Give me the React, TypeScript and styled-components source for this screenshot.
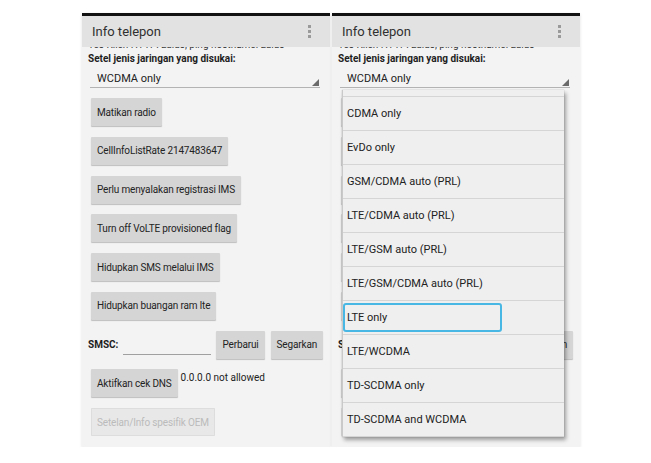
import React from "react";
import styled, { createGlobalStyle, css } from "styled-components";

const GlobalStyle = createGlobalStyle`
  html, body { margin: 0; padding: 0; background: #ffffff; }
  body {
    font-family: Roboto, "Noto Sans", "Liberation Sans", sans-serif;
    -webkit-font-smoothing: antialiased;
  }
`;

const Stage = styled.main`
  display: flex;
  gap: 2px;
  padding: 13px 0 0 82px;
`;

const Phone = styled.section`
  position: relative;
  width: 248px;
  height: 434px;
  display: flex;
  flex-direction: column;
  background: #f3f3f3;
  overflow: hidden;
  box-shadow: 0 1px 3px rgba(0, 0, 0, 0.12);
`;

const StatusStrip = styled.div`
  flex: none;
  height: 3px;
  background: #121212;
`;

const ActionBar = styled.header`
  flex: none;
  height: 31px;
  display: flex;
  align-items: center;
  justify-content: space-between;
  padding: 0 19px 0 10px;
  background: #e2e2e2;
`;

const Title = styled.h1`
  margin: 0;
  font-size: 13px;
  font-weight: 400;
  color: #303030;
`;

const MenuDots = styled.span`
  display: flex;
  flex-direction: column;
  gap: 2px;
`;

const Dot = styled.i`
  display: block;
  width: 3px;
  height: 3px;
  background: #9a9a9a;
`;

const Content = styled.div`
  flex: 1;
  overflow: hidden;
  padding-left: 6px;
  display: flex;
  flex-direction: column;
  align-items: flex-start;
`;

/* last line of the info list, scrolled mostly under the action bar */
const ClippedLine = styled.p`
  margin: -9px 0 1px;
  font-size: 10px;
  line-height: 13px;
  color: #3a3a3a;
  white-space: nowrap;
`;

const FieldLabel = styled.div`
  font-size: 10px;
  font-weight: 700;
  line-height: 13px;
  color: #1e1e1e;
  white-space: nowrap;
`;

const Spinner = styled.div`
  align-self: stretch;
  box-sizing: border-box;
  height: 23px;
  margin: 0 10px 0 2px;
  padding: 0 1px 1px 7px;
  display: flex;
  border-bottom: 1px solid #b3b3b3;
`;

const SpinnerValue = styled.span`
  flex: 1;
  padding-top: 7px;
  font-size: 11px;
  line-height: 13px;
  color: #222222;
`;

const CornerMark = styled.svg`
  align-self: flex-end;
  flex: none;
`;

const Controls = styled.div`
  align-self: stretch;
  display: flex;
  flex-direction: column;
  align-items: flex-start;
  gap: 10.75px;
  margin-top: 10px;
`;

const Button = styled.button<{ $ml?: number }>`
  flex: none;
  height: 28px;
  margin: 0 0 0 ${(p) => (p.$ml ?? 3)}px;
  padding: 0 6px;
  border: none;
  border-radius: 1px;
  background: #d5d5d5;
  color: #232323;
  font-family: inherit;
  font-size: 10px;
  letter-spacing: -0.15px;
  white-space: nowrap;
  box-shadow: 0 1px 1px rgba(0, 0, 0, 0.22);

  &:disabled {
    background: #e8e8e8;
    color: #bbbbbb;
    box-shadow: inset 0 0 0 1px #dddddd;
  }
`;

const SmscRow = styled.div`
  display: flex;
  align-items: center;
`;

const TextInput = styled.span`
  align-self: flex-end;
  width: 88px;
  height: 18px;
  margin: 0 5px 4px 5px;
  border-bottom: 1px solid #a0a0a0;
`;

const DnsRow = styled.div`
  display: flex;
  align-items: flex-start;
  gap: 3px;
`;

const Note = styled.span`
  margin-top: 2px;
  font-size: 10px;
  line-height: 13px;
  color: #222222;
  white-space: nowrap;
`;

/* open spinner list, floating over the page */
const Popup = styled.div`
  position: absolute;
  left: 10px;
  top: 77px;
  width: 221px;
  height: 347px;
  overflow: hidden;
  background: #efefef;
  border-left: 1px solid #c9c9c9;
  box-shadow: 2px 3px 4px rgba(0, 0, 0, 0.35), 0 0 1px rgba(0, 0, 0, 0.25);
`;

const OptionList = styled.ul`
  list-style: none;
  margin: -27px 0 0;
  padding: 0;
`;

const Option = styled.li<{ $focused?: boolean }>`
  position: relative;
  box-sizing: border-box;
  height: 34px;
  display: flex;
  align-items: center;
  padding-left: 4px;
  border-bottom: 1px solid #d5d5d5;
  font-size: 11px;
  color: #222222;
  white-space: nowrap;

  ${(p) =>
    p.$focused &&
    css`
      &::after {
        content: "";
        position: absolute;
        left: 0;
        top: 2px;
        width: 159px;
        height: 29px;
        box-sizing: border-box;
        border: 2px solid #49b7e3;
        border-radius: 3px;
      }
    `}
`;

const NETWORK_TYPES = [
  "CDMA auto (PRL)",
  "CDMA only",
  "EvDo only",
  "GSM/CDMA auto (PRL)",
  "LTE/CDMA auto (PRL)",
  "LTE/GSM auto (PRL)",
  "LTE/GSM/CDMA auto (PRL)",
  "LTE only",
  "LTE/WCDMA",
  "TD-SCDMA only",
  "TD-SCDMA and WCDMA",
];

function RadioInfoScreen({ listOpen }: { listOpen?: boolean }) {
  return (
    <Phone>
      <StatusStrip />
      <ActionBar>
        <Title>Info telepon</Title>
        <MenuDots>
          <Dot />
          <Dot />
          <Dot />
        </MenuDots>
      </ActionBar>
      <Content>
        <ClippedLine>Tes Klien HTTP: Lulus, ping hostname: Lulus</ClippedLine>
        <FieldLabel>Setel jenis jaringan yang disukai:</FieldLabel>
        <Spinner>
          <SpinnerValue>WCDMA only</SpinnerValue>
          <CornerMark width="7" height="7" viewBox="0 0 7 7">
            <polygon points="7,0 7,7 0,7" fill="#6a6a6a" />
          </CornerMark>
        </Spinner>
        <Controls>
          <Button>Matikan radio</Button>
          <Button>CellInfoListRate 2147483647</Button>
          <Button>Perlu menyalakan registrasi IMS</Button>
          <Button>Turn off VoLTE provisioned flag</Button>
          <Button>Hidupkan SMS melalui IMS</Button>
          <Button>Hidupkan buangan ram lte</Button>
          <SmscRow>
            <FieldLabel>SMSC:</FieldLabel>
            <TextInput />
            <Button $ml={0}>Perbarui</Button>
            <Button $ml={6}>Segarkan</Button>
          </SmscRow>
          <DnsRow>
            <Button>Aktifkan cek DNS</Button>
            <Note>0.0.0.0 not allowed</Note>
          </DnsRow>
          <Button disabled>Setelan/Info spesifik OEM</Button>
        </Controls>
      </Content>
      {listOpen && (
        <Popup>
          <OptionList>
            {NETWORK_TYPES.map((t) => (
              <Option key={t} $focused={t === "LTE only"}>
                {t}
              </Option>
            ))}
          </OptionList>
        </Popup>
      )}
    </Phone>
  );
}

export default function App() {
  return (
    <>
      <GlobalStyle />
      <Stage>
        <RadioInfoScreen />
        <RadioInfoScreen listOpen />
      </Stage>
    </>
  );
}
